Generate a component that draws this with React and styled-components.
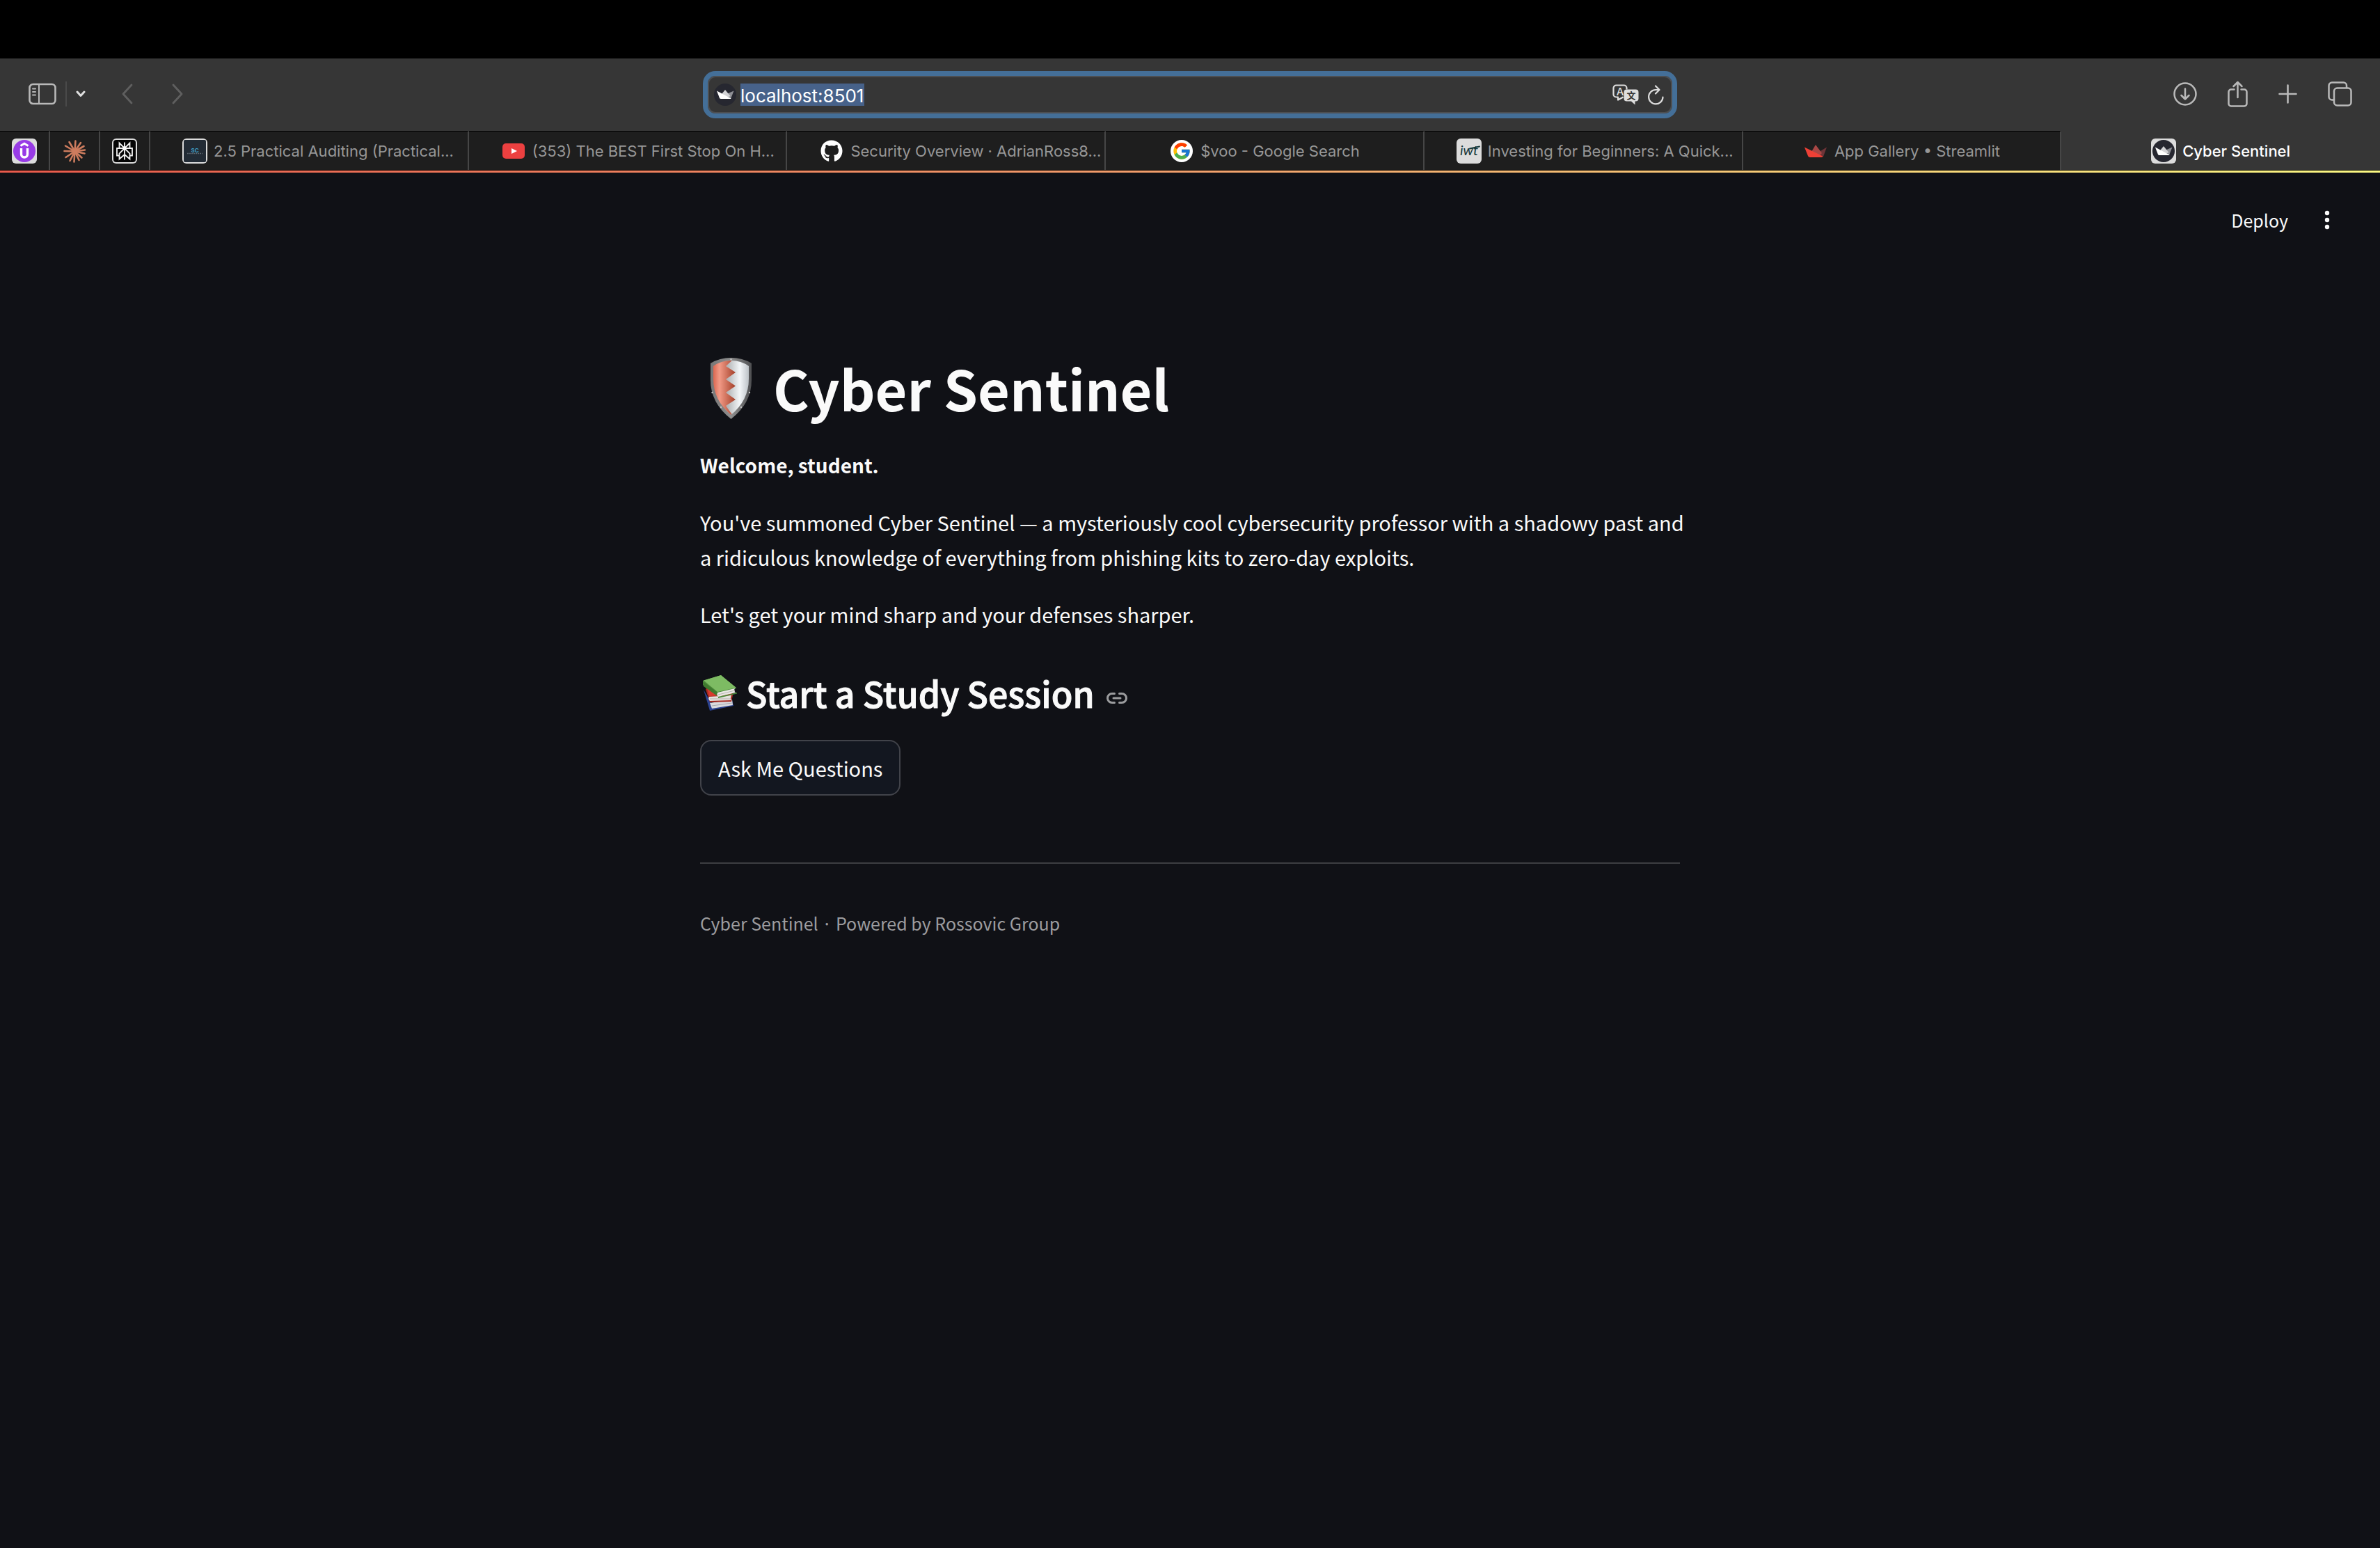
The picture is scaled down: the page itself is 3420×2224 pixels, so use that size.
import React from "react";
import styled, { createGlobalStyle } from "styled-components";
import { FaGithub } from "react-icons/fa";
import { FcGoogle } from "react-icons/fc";

const chromeFont = `Inter, Roboto, "Liberation Sans", sans-serif`;
const pageFont = `"Noto Sans CJK JP", "Noto Sans CJK SC", "Noto Sans", sans-serif`;

const GlobalStyle = createGlobalStyle`
  *, *::before, *::after { box-sizing: border-box; }
  body { margin: 0; background: #101116; }
  h1, h2, p { margin: 0; }
  svg { display: block; flex: none; }
  button { font: inherit; color: inherit; background: none; border: 0; padding: 0; cursor: pointer; }
`;

const Window = styled.div`
  display: flex;
  flex-direction: column;
  min-height: 100vh;
`;

const ScreenTop = styled.div`
  height: 84px;
  background: #000;
`;

const Toolbar = styled.header`
  display: grid;
  grid-template-columns: 1fr minmax(0, 1400px) 1fr;
  align-items: center;
  height: 104px;
  background: #363636;
  font-family: ${chromeFont};
`;

const ToolbarSide = styled.div`
  display: flex;
  align-items: center;
  justify-content: ${(p) => (p.$end ? "flex-end" : "flex-start")};
  gap: ${(p) => (p.$end ? 44 : 52)}px;
  padding: 0 40px 2px 41px;
  color: #b9b9b9;
`;

const ToolGroup = styled.div`
  display: flex;
  align-items: center;
  gap: ${(p) => p.$gap}px;
`;

const ToolDivider = styled.span`
  width: 2px;
  height: 36px;
  background: #4a4a4a;
`;

const IconButton = styled.button`
  display: flex;
  color: ${(p) => p.$color || "#b9b9b9"};
`;

const AddressBar = styled.div`
  display: flex;
  align-items: center;
  gap: 13px;
  height: 68px;
  padding: 0 12px 0 7px;
  border: 7px solid #446f98;
  border-radius: 18px;
  background: #363636;
  box-shadow: inset 0 0 0 2px #4d4f52;
`;

const AddressField = styled.label`
  display: flex;
  align-items: center;
  gap: 6px;
  flex: 1;
  padding-left: 2px;
`;

const AddressInput = styled.input`
  width: 178px;
  height: 32px;
  padding: 2px 0 0;
  border: 0;
  outline: 0;
  background: #47628a;
  color: #fff;
  font: 400 26px/30px ${chromeFont};
`;

const TabStrip = styled.nav`
  display: flex;
  height: 57px;
  background: #1e1e1e;
  border-bottom: 1px solid #000;
  font-family: ${chromeFont};
`;

const PinnedTab = styled.button`
  display: flex;
  align-items: center;
  justify-content: center;
  width: 72px;
  border-top: 1px solid #000;
  border-right: 2px solid #464646;
`;

const OpenTabs = styled.div`
  display: grid;
  grid-auto-flow: column;
  grid-auto-columns: minmax(0, 1fr);
  flex: 1;
`;

const Tab = styled.button`
  display: flex;
  align-items: center;
  justify-content: ${(p) => (p.$elided ? "flex-start" : "center")};
  gap: 9px;
  padding: 0 0 0 ${(p) => (p.$elided ? 46 : 0)}px;
  border-top: 1px solid ${(p) => (p.$active ? "#363636" : "#000")};
  border-right: ${(p) => (p.$active ? 0 : 2)}px solid #464646;
  background: ${(p) => (p.$active ? "#363636" : "#1e1e1e")};
  color: ${(p) => (p.$active ? "#fff" : "#979797")};
  font-weight: ${(p) => (p.$active ? 500 : 400)};
  font-size: 22px;
  line-height: 28px;
`;

const TabLabel = styled.span`
  overflow: hidden;
  white-space: nowrap;
`;

const Decoration = styled.div`
  height: 3px;
  background: linear-gradient(90deg, #e95a4c, #f2a06c 50%, #fbf983);
`;

const Page = styled.div`
  flex: 1;
  background: #101116;
  color: #fafafa;
  font-family: ${pageFont};
`;

const AppHeader = styled.div`
  display: flex;
  align-items: center;
  justify-content: flex-end;
  gap: 48px;
  height: 135px;
  padding-right: 68px;
`;

const DeployButton = styled.button`
  font-size: 25px;
  line-height: 40px;
`;

const Content = styled.main`
  max-width: 1408px;
  margin: 0 auto;
  padding-top: 121px;
`;

const Title = styled.h1`
  display: flex;
  align-items: center;
  gap: 15px;
  margin-bottom: 33px;
  font-size: 79px;
  font-weight: 700;
  line-height: 106px;
`;

const Welcome = styled.p`
  margin-bottom: 32px;
  font-size: 28px;
  font-weight: 700;
  line-height: 50px;
`;

const Paragraph = styled.p`
  margin: 0 -8px 32px 0;
  font-size: 29px;
  line-height: 50px;
`;

const Subtitle = styled.h2`
  display: flex;
  align-items: center;
  gap: 10px;
  margin: 54px 0 34px;
  font-size: 50px;
  font-weight: 500;
  line-height: 68px;
  -webkit-text-stroke: 1px #fafafa;
`;

const AnchorLink = styled.a`
  display: flex;
  padding-left: 6px;
  color: #9b9c9e;
`;

const AskButton = styled.button`
  height: 80px;
  padding: 0 24px;
  border: 2px solid #41434a;
  border-radius: 16px;
  background: #131720;
  font-size: 29px;
  line-height: 50px;
`;

const Rule = styled.hr`
  height: 2px;
  margin: 96px 0 63px;
  border: 0;
  background: #3d3e42;
`;

const Caption = styled.p`
  color: #9c9c9f;
  font-size: 25px;
  line-height: 44px;
`;

const line = { fill: "none", stroke: "currentColor", strokeLinecap: "round", strokeLinejoin: "round" };

const SidebarIcon = () => (
  <svg width="40" height="32" viewBox="0 0 40 32" {...line} strokeWidth="2.6">
    <rect x="1.5" y="2" width="37" height="28" rx="5" />
    <path d="M15 2v28" strokeWidth="2" />
    <path d="M6 8.500h4M6 13h4M6 17.500h4" strokeWidth="2" />
  </svg>
);
const CaretIcon = () => (
  <svg width="14" height="10" viewBox="0 0 14 10" {...line} strokeWidth="3"><path d="M2 2l5 5.500L12 2" /></svg>
);
const BackIcon = () => (
  <svg width="16" height="30" viewBox="0 0 16 30" {...line} strokeWidth="2.800"><path d="M14 2L2 15l12 13" /></svg>
);
const ForwardIcon = () => (
  <svg width="16" height="30" viewBox="0 0 16 30" {...line} strokeWidth="2.800"><path d="M2 2l12 13L2 28" /></svg>
);
const DownloadIcon = () => (
  <svg width="34" height="34" viewBox="0 0 34 34" {...line} strokeWidth="2.500">
    <circle cx="17" cy="17" r="15.500" /><path d="M17 9.500v15M11.500 19l5.500 5.500L22.500 19" />
  </svg>
);
const ShareIcon = () => (
  <svg width="29" height="38" viewBox="0 0 29 38" {...line} strokeWidth="2.500">
    <path d="M9.500 12.500H5a3.500 3.500 0 0 0-3.500 3.500v17A3.500 3.500 0 0 0 5 36.500h19a3.500 3.500 0 0 0 3.500-3.500V16a3.500 3.500 0 0 0-3.500-3.500h-4.500" />
    <path d="M14.500 24V2.500M8.500 8l6-6 6 6" />
  </svg>
);
const PlusIcon = () => (
  <svg width="27" height="28" viewBox="0 0 27 28" {...line} strokeWidth="2.600"><path d="M13.500 1.500v25M1.500 14h24" /></svg>
);
const TabsIcon = () => (
  <svg width="35" height="36" viewBox="0 0 35 36" {...line} strokeWidth="2.500">
    <rect x="9" y="9.500" width="24.500" height="25" rx="4.500" />
    <path d="M9 26.500H6A4.500 4.500 0 0 1 1.500 22V6A4.500 4.500 0 0 1 6 1.500h16.500A4.500 4.500 0 0 1 27 6v3" />
  </svg>
);
const TranslateIcon = () => (
  <svg width="38" height="30" viewBox="0 0 38 30">
    <path d="M15.500 18.500l-7.500 4v-4H5.500a4 4 0 0 1-4-4v-9a4 4 0 0 1 4-4h11a4 4 0 0 1 4 4v2" fill="none" stroke="#dedede" strokeWidth="2.200" strokeLinejoin="round" />
    <text x="11" y="16" textAnchor="middle" fontFamily="Inter, sans-serif" fontSize="15" fontWeight="500" fill="#dedede">A</text>
    <path d="M20.500 7.500h13a4 4 0 0 1 4 4v9a4 4 0 0 1-4 4h-1v5l-5.500-5h-6.500a4 4 0 0 1-4-4v-9a4 4 0 0 1 4-4z" fill="#dedede" />
    <text x="27" y="21" textAnchor="middle" fontFamily="'Noto Sans CJK SC', sans-serif" fontSize="13" fontWeight="700" fill="#363636">文</text>
  </svg>
);
const ReloadIcon = () => (
  <svg width="23" height="29" viewBox="0 0 23 29" fill="none" stroke="#dedede" strokeWidth="2.200" strokeLinecap="round" strokeLinejoin="round">
    <path d="M21.500 17.500A10.200 10.200 0 1 1 11.300 7h5M11 1.500L16.500 7 11 12.500" />
  </svg>
);

const Tile = ({ fill = "#dcdcdc", children }) => (
  <svg width="36" height="36" viewBox="0 0 36 36"><rect width="36" height="36" rx="6" fill={fill} />{children}</svg>
);
const CrownShape = () => (
  <g>
    <path d="M30.500 12.500L26 24h-7l-1-6z" fill="#8f9096" />
    <path d="M18 11l7.500 9-7 3-7-4z" fill="#d3d3d6" />
    <path d="M6 12.500L26.500 23.500Q26 24 25 24H12q-1.500 0-2-1z" fill="#fff" />
  </g>
);
const UdemyTile = () => (
  <Tile>
    <circle cx="18" cy="18" r="16" fill="#983be6" />
    <path d="M12.500 10.500L18 7.200l5.500 3.300" fill="none" stroke="#fff" strokeWidth="3" />
    <path d="M13.500 14v8.500a4.500 4.500 0 0 0 9 0V14" fill="none" stroke="#fff" strokeWidth="3.400" />
  </Tile>
);
const rays = [[10.5, 5], [19.5, 3.500], [27, 6], [31.500, 11], [33, 16.500], [32.500, 21.500], [28.500, 27.500], [24.500, 31], [17.500, 33.500], [11.500, 32], [5.500, 27], [3.500, 18], [5, 10.500]];
const BurstIcon = () => (
  <svg width="36" height="36" viewBox="0 0 36 36" stroke="#cd7c5e" strokeWidth="2.600" strokeLinecap="round">
    {rays.map(([x, y]) => <path key={`${x}-${y}`} d={`M18.500 18.500L${x} ${y}`} />)}
    <circle cx="18.500" cy="18.500" r="4" fill="#cd7c5e" stroke="none" />
  </svg>
);
const PerplexityTile = () => (
  <Tile>
    <rect x="2" y="2" width="32" height="32" rx="4" fill="#050505" />
    <g fill="none" stroke="#f4f4f4" strokeWidth="1.800" strokeLinejoin="miter">
      <path d="M18 5.500v25M10.500 6.500l7.500 7.500 7.500-7.500v7.500h-15zM10.500 14H7v10.500h3.500M25.500 14H29v10.500h-3.500M18 14l-7.500 7.500v8l7.500-6.500 7.500 6.500v-8z" />
    </g>
    <circle cx="18" cy="13.500" r="2.300" fill="#fff" />
  </Tile>
);
const CourseTile = () => (
  <Tile>
    <rect x="2" y="2" width="32" height="32" rx="2" fill="#222b35" />
    <text x="18" y="20" textAnchor="middle" fontFamily="Inter, sans-serif" fontSize="8" fontWeight="700" fill="#3f9ec9">SC</text>
    <path d="M7 21.500h22" stroke="#59636c" strokeWidth="1.600" strokeDasharray="2 1" />
  </Tile>
);
const YoutubeIcon = () => (
  <svg width="36" height="36" viewBox="0 0 36 36">
    <rect x="2" y="7" width="32" height="22" rx="5" fill="#ec4040" /><path d="M15 14l8 4-8 4z" fill="#fff" />
  </svg>
);
const GithubIcon = () => (
  <svg width="36" height="36" viewBox="0 0 36 36"><FaGithub x="2" y="2" size="32" color="#fff" /></svg>
);
const GoogleIcon = () => (
  <svg width="36" height="36" viewBox="0 0 36 36"><circle cx="18" cy="18" r="16" fill="#fff" /><FcGoogle x="4" y="4" size="28" /></svg>
);
const InvestTile = () => (
  <Tile>
    <text x="18" y="24" textAnchor="middle" fontFamily="Lato, sans-serif" fontStyle="italic" fontWeight="400" fontSize="20" fill="#16383a">iwt</text>
    <path d="M19 14.500l14-3" stroke="#16383a" strokeWidth="1.800" strokeLinecap="round" />
  </Tile>
);
const StreamlitIcon = () => (
  <svg width="36" height="36" viewBox="0 0 36 36">
    <path d="M34 12.500L29 26l-9-5z" fill="#6f3438" />
    <path d="M18 9l9 12-4 4-11-6z" fill="#a94745" />
    <path d="M2 12.500L28.500 25.500q-.5 1.500-2.500 1.500H10q-2.500 0-3-2z" fill="#ee4036" />
  </svg>
);
const SentinelTile = () => (
  <Tile><circle cx="18" cy="18" r="16" fill="#262730" /><CrownShape /></Tile>
);
const SentinelIcon = () => (
  <svg width="32" height="32" viewBox="2 2 32 32"><circle cx="18" cy="18" r="16" fill="#262730" /><CrownShape /></svg>
);

const KebabIcon = () => (
  <svg width="16" height="28" viewBox="0 0 16 28" fill="#fafafa">
    <circle cx="8" cy="4" r="3.200" /><circle cx="8" cy="14" r="3.200" /><circle cx="8" cy="24" r="3.200" />
  </svg>
);
const ShieldIcon = () => (
  <svg width="90" height="90" viewBox="0 0 90 90" role="img" aria-label="Shield">
    <defs>
      <linearGradient id="rim" x1="0" x2="1"><stop offset="0" stopColor="#777" /><stop offset=".5" stopColor="#8d8d8d" /><stop offset="1" stopColor="#4f5052" /></linearGradient>
      <linearGradient id="red" x1="0" x2="1"><stop offset="0" stopColor="#d9614a" /><stop offset=".3" stopColor="#f29a86" /><stop offset="1" stopColor="#a33f29" /></linearGradient>
      <linearGradient id="steel" x1="0" x2="1"><stop offset="0" stopColor="#a7aaac" /><stop offset=".6" stopColor="#f3f6f8" /><stop offset="1" stopColor="#b9bfc4" /></linearGradient>
      <clipPath id="face"><path d="M19 14Q30 6 44.500 6T70 14v18Q70 63 44.500 84 19 63 19 32z" /></clipPath>
    </defs>
    <path d="M15 10Q28 2 44.500 2T74 10v24Q74 67 44.500 90 15 67 15 34z" fill="url(#rim)" />
    <g clipPath="url(#face)">
      <rect x="36" y="4" width="35" height="82" fill="url(#steel)" />
      <path d="M18 4h30l-11 10 14 9-14 10 14 9.500-14 9.500 14 10-14 9 10 14H18z" fill="url(#red)" />
    </g>
    <g fill="#c2c2c2"><circle cx="44.500" cy="4.500" r="1.200" /><circle cx="17.500" cy="52" r="1.200" /><circle cx="71" cy="52" r="1.200" /><circle cx="30" cy="73" r="1.200" /><circle cx="59" cy="73" r="1.200" /></g>
  </svg>
);
const BooksIcon = () => (
  <svg width="56" height="56" viewBox="0 0 56 56" role="img" aria-label="Books">
    <path d="M5 24l9 30 34-7-2-8-30 4z" fill="#2c4390" />
    <path d="M14 43l32-5 1 8-30 5z" fill="#d9dade" /><path d="M17 47l29-4" stroke="#a6a8ad" />
    <path d="M8 23l6-5 32 9 1 5-2 9-31 1z" fill="#a82a22" />
    <path d="M10 21l36 8-2 3-31 1z" fill="#d83a2e" />
    <path d="M13 34l32-2q-2 4 0 7l-31 1q-3-3-1-6z" fill="#e4e2de" /><path d="M14 37h30" stroke="#b5b1ab" />
    <path d="M4 11L30 3l22 19-27 9L4 17z" fill="#4c8a3a" />
    <path d="M5 10.500L30 3l22 18-27 6z" fill="#7dbb63" />
    <path d="M25 28l25-6q-2 3 1 6l-25 6q-3-3-1-6z" fill="#e8e7e4" /><path d="M26 31l24-6" stroke="#b8b6b0" />
    <path d="M4 12l21 16q-2 4 1 6L5 19z" fill="#3f7a2f" /><path d="M26 34l27-6v1.500l-27 6.500z" fill="#4c8a3a" />
  </svg>
);
const LinkIcon = () => (
  <svg width="32" height="32" viewBox="0 0 32 32" {...line} strokeWidth="3">
    <path d="M12.500 17.500H9a6.500 6.500 0 0 0 0 13h3.500M19.500 17.500H23a6.500 6.500 0 0 1 0 13h-3.500M11 24h10" />
  </svg>
);

const pinned = [
  { name: "Udemy", Icon: UdemyTile },
  { name: "Claude", Icon: BurstIcon },
  { name: "Perplexity", Icon: PerplexityTile },
];

const tabs = [
  { label: "2.5 Practical Auditing (Practical...", Icon: CourseTile, elided: true },
  { label: "(353) The BEST First Stop On H...", Icon: YoutubeIcon, elided: true },
  { label: "Security Overview · AdrianRoss8...", Icon: GithubIcon, elided: true },
  { label: "$voo - Google Search", Icon: GoogleIcon },
  { label: "Investing for Beginners: A Quick...", Icon: InvestTile, elided: true },
  { label: "App Gallery • Streamlit", Icon: StreamlitIcon },
  { label: "Cyber Sentinel", Icon: SentinelTile, active: true },
];

export default function App() {
  return (
    <Window>
      <GlobalStyle />
      <ScreenTop />
      <Toolbar>
        <ToolbarSide>
          <ToolGroup $gap={13}>
            <IconButton aria-label="Show sidebar"><SidebarIcon /></IconButton>
            <ToolDivider />
            <IconButton aria-label="Tab groups" $color="#e0e0e0"><CaretIcon /></IconButton>
          </ToolGroup>
          <ToolGroup $gap={56}>
            <IconButton aria-label="Back" $color="#5f5f5f"><BackIcon /></IconButton>
            <IconButton aria-label="Forward" $color="#5f5f5f"><ForwardIcon /></IconButton>
          </ToolGroup>
        </ToolbarSide>
        <AddressBar>
          <AddressField>
            <SentinelIcon />
            <AddressInput type="text" aria-label="Address" defaultValue="localhost:8501" />
          </AddressField>
          <IconButton aria-label="Translate"><TranslateIcon /></IconButton>
          <IconButton aria-label="Reload"><ReloadIcon /></IconButton>
        </AddressBar>
        <ToolbarSide $end>
          <IconButton aria-label="Downloads"><DownloadIcon /></IconButton>
          <IconButton aria-label="Share"><ShareIcon /></IconButton>
          <IconButton aria-label="New tab"><PlusIcon /></IconButton>
          <IconButton aria-label="Tab overview"><TabsIcon /></IconButton>
        </ToolbarSide>
      </Toolbar>
      <TabStrip>
        {pinned.map(({ name, Icon }) => (
          <PinnedTab key={name} aria-label={name}><Icon /></PinnedTab>
        ))}
        <OpenTabs>
          {tabs.map(({ label, Icon, elided, active }) => (
            <Tab key={label} $elided={elided} $active={active}>
              <Icon />
              <TabLabel>{label}</TabLabel>
            </Tab>
          ))}
        </OpenTabs>
      </TabStrip>
      <Page>
        <Decoration />
        <AppHeader>
          <DeployButton>Deploy</DeployButton>
          <IconButton aria-label="Main menu"><KebabIcon /></IconButton>
        </AppHeader>
        <Content>
          <Title><ShieldIcon />Cyber Sentinel</Title>
          <Welcome>Welcome, student.</Welcome>
          <Paragraph>
            You've summoned Cyber Sentinel — a mysteriously cool cybersecurity professor with a shadowy past and a
            ridiculous knowledge of everything from phishing kits to zero-day exploits.
          </Paragraph>
          <Paragraph>Let's get your mind sharp and your defenses sharper.</Paragraph>
          <Subtitle id="start-a-study-session">
            <BooksIcon />
            Start a Study Session
            <AnchorLink href="#start-a-study-session" aria-label="Link to heading"><LinkIcon /></AnchorLink>
          </Subtitle>
          <AskButton>Ask Me Questions</AskButton>
          <Rule />
          <Caption>Cyber Sentinel · Powered by Rossovic Group</Caption>
        </Content>
      </Page>
    </Window>
  );
}
